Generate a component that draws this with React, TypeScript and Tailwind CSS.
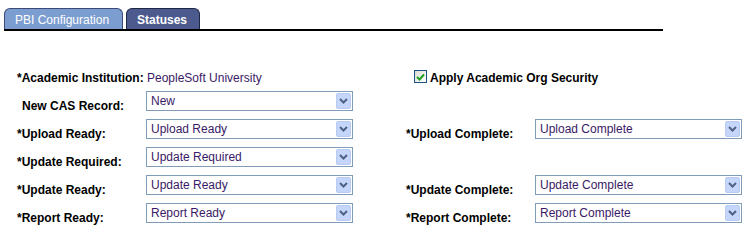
import React from 'react'

const font = { fontFamily: '"Liberation Sans", Arial, sans-serif' }

function Chevron() {
  return (
    <svg width="9" height="6" viewBox="0 0 9 6" className="block">
      <path d="M1 1 L4.5 4.5 L8 1" fill="none" stroke="#4d6185" strokeWidth="2" />
    </svg>
  )
}

function Select({ value }: { value: string }) {
  return (
    <div className="flex h-[20px] w-[207px] items-center justify-between border border-[#7f9db9] bg-white pl-[4px] pr-[1px]">
      <span className="text-[12px] leading-[14px] text-[#3a1a66]">{value}</span>
      <div className="flex h-[16px] w-[15px] items-center justify-center rounded-[2px] border border-[#b8cbf5] bg-[#c6d6fb]">
        <Chevron />
      </div>
    </div>
  )
}

function Label({ text, indent }: { text: string; indent?: boolean }) {
  return (
    <div className={`w-[129px] pt-[8px] text-[12px] font-bold leading-[14px] text-black ${indent ? 'pl-[5px]' : ''}`}>
      {text}
    </div>
  )
}

function Field({ label, value, indent }: { label: string; value: string; indent?: boolean }) {
  return (
    <div className="flex items-start">
      <Label text={label} indent={indent} />
      <Select value={value} />
    </div>
  )
}

export default function App() {
  return (
    <div className="h-[240px] w-[746px] bg-white" style={font}>
      <div className="pl-[4px] pt-[8px]">
        <div className="flex w-[659px] gap-[3px] border-b-2 border-black">
          <div className="flex h-[21px] w-[119px] items-center rounded-t-[6px] border border-b-0 border-[#3b4a78] bg-[#7b9dd0] pl-[10px] pt-[2px] text-[12px] text-white">
            PBI Configuration
          </div>
          <div className="flex h-[21px] w-[74px] items-center rounded-t-[6px] border border-b-0 border-[#1f2747] bg-[#4c5a8e] pl-[10px] pt-[2px] text-[12px] font-bold text-white">
            Statuses
          </div>
        </div>
      </div>

      <div className="mt-[32px] grid grid-cols-[389px_auto] grid-rows-[28px_28px_28px_28px_28px_28px] pl-[17px]">
        <div className="flex items-start">
          <Label text="*Academic Institution:" />
          <div className="pl-[1px] pt-[8px] text-[12px] leading-[14px] text-[#3a1a66]">PeopleSoft University</div>
        </div>
        <div className="flex items-start pl-[8px] pt-[7px]">
          <div className="flex h-[13px] w-[13px] items-center justify-center border border-[#1c5180] bg-gradient-to-br from-[#dcdcd6] to-white">
            <svg width="9" height="8" viewBox="0 0 9 8">
              <path d="M1 4 L3.5 6.5 L8 1.5" fill="none" stroke="#21a121" strokeWidth="2" />
            </svg>
          </div>
          <span className="pl-[3px] pt-[1px] text-[12px] font-bold leading-[14px] text-black">
            Apply Academic Org Security
          </span>
        </div>

        <Field label="New CAS Record:" value="New" indent />
        <div />

        <Field label="*Upload Ready:" value="Upload Ready" />
        <Field label="*Upload Complete:" value="Upload Complete" />

        <Field label="*Update Required:" value="Update Required" />
        <div />

        <Field label="*Update Ready:" value="Update Ready" />
        <Field label="*Update Complete:" value="Update Complete" />

        <Field label="*Report Ready:" value="Report Ready" />
        <Field label="*Report Complete:" value="Report Complete" />
      </div>
    </div>
  )
}
